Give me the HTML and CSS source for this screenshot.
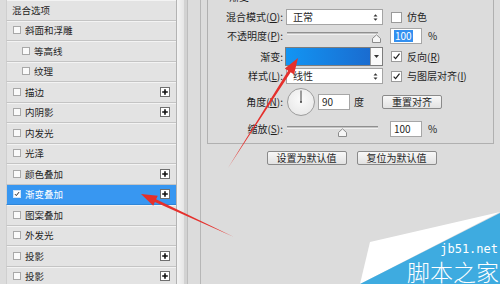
FILE: index.html
```html
<!DOCTYPE html>
<html>
<head>
<meta charset="utf-8">
<link rel="stylesheet" href="styles.css">
</head>
<body>
<div class="app">
  <div class="side">
    <div class="row plain"><span class="label">混合选项</span></div>
    <div class="row"><span class="cb"></span><span class="label">斜面和浮雕</span></div>
    <div class="row sub"><span class="cb"></span><span class="label">等高线</span></div>
    <div class="row sub"><span class="cb"></span><span class="label">纹理</span></div>
    <div class="row"><span class="cb"></span><span class="label">描边</span><svg class="plus" viewBox="0 0 10 10"><rect x="0.5" y="0.5" width="9" height="9" fill="#fff" stroke="#6e6e6e"/><path d="M5 2.2v5.6M2.2 5h5.6" stroke="#111" stroke-width="1.6"/></svg></div>
    <div class="row"><span class="cb"></span><span class="label">内阴影</span><svg class="plus" viewBox="0 0 10 10"><rect x="0.5" y="0.5" width="9" height="9" fill="#fff" stroke="#6e6e6e"/><path d="M5 2.2v5.6M2.2 5h5.6" stroke="#111" stroke-width="1.6"/></svg></div>
    <div class="row"><span class="cb"></span><span class="label">内发光</span></div>
    <div class="row"><span class="cb"></span><span class="label">光泽</span></div>
    <div class="row"><span class="cb"></span><span class="label">颜色叠加</span><svg class="plus" viewBox="0 0 10 10"><rect x="0.5" y="0.5" width="9" height="9" fill="#fff" stroke="#6e6e6e"/><path d="M5 2.2v5.6M2.2 5h5.6" stroke="#111" stroke-width="1.6"/></svg></div>
    <div class="row sel"><span class="cb checked"><svg viewBox="0 0 8 8"><path d="M1.3 4.2l1.8 1.9 3.6-4.6" fill="none" stroke="#222" stroke-width="1.3"/></svg></span><span class="label">渐变叠加</span><svg class="plus" viewBox="0 0 10 10"><rect x="0.5" y="0.5" width="9" height="9" fill="#fff" stroke="#6e6e6e"/><path d="M5 2.2v5.6M2.2 5h5.6" stroke="#111" stroke-width="1.6"/></svg></div>
    <div class="row"><span class="cb"></span><span class="label">图案叠加</span></div>
    <div class="row"><span class="cb"></span><span class="label">外发光</span></div>
    <div class="row"><span class="cb"></span><span class="label">投影</span><svg class="plus" viewBox="0 0 10 10"><rect x="0.5" y="0.5" width="9" height="9" fill="#fff" stroke="#6e6e6e"/><path d="M5 2.2v5.6M2.2 5h5.6" stroke="#111" stroke-width="1.6"/></svg></div>
    <div class="row"><span class="cb"></span><span class="label">投影</span><svg class="plus" viewBox="0 0 10 10"><rect x="0.5" y="0.5" width="9" height="9" fill="#fff" stroke="#6e6e6e"/><path d="M5 2.2v5.6M2.2 5h5.6" stroke="#111" stroke-width="1.6"/></svg></div>
  </div>
  <div class="scroll"><div class="s1"></div><div class="s2"></div><div class="s3"></div><div class="s4"></div><div class="s5"></div></div>
  <div class="main">
    <div class="group">
      <div class="legend">渐变</div>
      <div class="frow r1">
        <span class="flabel">混合模式(<u>O</u>):</span>
        <div class="select"><span>正常</span><svg class="ud" viewBox="0 0 5 9"><path d="M0.5 3.6L2.5 1.2 4.5 3.6Z M0.5 5.4L2.5 7.8 4.5 5.4Z" fill="#333"/></svg></div>
        <span class="check"></span><span class="opt">仿色</span>
      </div>
      <div class="frow r2">
        <span class="flabel">不透明度(<u>P</u>):</span>
        <div class="slider"><div class="track"></div><svg class="thumb" style="left:86px" viewBox="0 0 9 9"><path d="M0.5 8.5V4.5L4.5 0.8 8.5 4.5V8.5Z" fill="#f6f6f6" stroke="#8c8c8c"/></svg></div>
        <div class="num sel-num"><span class="hl">100</span></div><span class="pct">%</span>
      </div>
      <div class="frow r3">
        <span class="flabel">渐变:</span>
        <div class="grad"><div class="gfill"></div><div class="gdrop"><svg viewBox="0 0 5 3" width="5" height="3"><path d="M0 0H5L2.5 3Z" fill="#333"/></svg></div></div>
        <span class="check on"><svg viewBox="0 0 11 11"><path d="M2 5.6l2.4 2.5 4.8-6" fill="none" stroke="#222" stroke-width="1.5"/></svg></span><span class="opt">反向(<u>R</u>)</span>
      </div>
      <div class="frow r4">
        <span class="flabel">样式(<u>L</u>):</span>
        <div class="select"><span>线性</span><svg class="ud" viewBox="0 0 5 9"><path d="M0.5 3.6L2.5 1.2 4.5 3.6Z M0.5 5.4L2.5 7.8 4.5 5.4Z" fill="#333"/></svg></div>
        <span class="check on"><svg viewBox="0 0 11 11"><path d="M2 5.6l2.4 2.5 4.8-6" fill="none" stroke="#222" stroke-width="1.5"/></svg></span><span class="opt">与图层对齐(<u>I</u>)</span>
      </div>
      <div class="frow r5">
        <span class="flabel">角度(<u>N</u>):</span>
        <div class="dial"><svg viewBox="0 0 28 28" width="28" height="28"><line x1="14" y1="14" x2="14" y2="2.5" stroke="#444" stroke-width="1"/><circle cx="14" cy="14" r="1" fill="#444"/></svg></div>
        <div class="num n90">90</div><span class="deg">度</span>
        <button class="btn realign">重置对齐</button>
      </div>
      <div class="frow r6">
        <span class="flabel">缩放(<u>S</u>):</span>
        <div class="slider"><div class="track"></div><svg class="thumb" style="left:52px" viewBox="0 0 9 9"><path d="M0.5 8.5V4.5L4.5 0.8 8.5 4.5V8.5Z" fill="#f6f6f6" stroke="#8c8c8c"/></svg></div>
        <div class="num">100</div><span class="pct">%</span>
      </div>
    </div>
    <div class="btns">
      <button class="btn wide">设置为默认值</button>
      <button class="btn wide">复位为默认值</button>
    </div>
  </div>
</div>
<svg class="overlay" viewBox="0 0 500 284" width="500" height="284">
  <polygon points="228,168 288.1,70.7 284.8,68.5 298,58 294.0,74.5 290.7,72.3" fill="#e5302c"/>
  <polygon points="234,237 154.9,202.1 153.2,205.7 141,194 157.8,195.7 156.1,199.3" fill="#e5302c"/>
  <polygon points="370,242 500,212 360,284" fill="#ffffff"/>
  <polygon points="360,284 500,213 500,284" fill="#3eabe0"/>
</svg>
<div class="wm-en">jb51.net</div>
<div class="wm-cn">脚本之家</div>
</body>
</html>
```

FILE: styles.css
```css
* { box-sizing: border-box; margin: 0; padding: 0; }
html, body { width: 500px; height: 284px; overflow: hidden; }
body {
  background: #dcdcdc;
  font-family: "Noto Sans CJK SC", "Noto Sans", sans-serif;
  font-size: 10px;
  line-height: 12px;
  color: #1f1f1f;
  position: relative;
}
u { text-decoration: underline; text-underline-offset: 1px; }
.app { display: flex; height: 284px; }

/* left list */
.side { width: 176px; flex: none; padding-left: 6px; display: flex; flex-direction: column; }
.row {
  height: 20.5px; flex: none;
  display: flex; align-items: center;
  background: #e3e3e3;
  border-bottom: 1px solid #c4c4c4;
  border-left: 1px solid #cfcfcf;
  box-shadow: inset 0 1px 0 #f3f3f3;
  padding-left: 6px; padding-right: 6px;
  font-size: 9.5px;
}
.row.plain { padding-left: 5px; }
.row.sub { padding-left: 15px; }
.row .label { flex: 1; white-space: nowrap; }
.cb { width: 8px; height: 8px; flex: none; margin-right: 4px; background: #fafafa; border: 1px solid #a8a8a8; display: flex; }
.cb svg { width: 6px; height: 6px; }
.row.sel { background: #3897f1; color: #fff; box-shadow: none; border-bottom-color: #2f86d8; }
.row.sel .cb { background: #fff; border-color: #d0e4f8; }
.plus { width: 10px; height: 10px; flex: none; }

/* scroll gutter */
.scroll { width: 24px; flex: none; display: flex; }
.s1 { width: 1px; background: #b3b3b3; }
.s2 { width: 7px; background: linear-gradient(to right, #f4f4f4, #e6e6e6); }
.s3 { width: 3px; background: #d2d2d2; }
.s4 { width: 1px; background: #bdbdbd; }
.s5 { flex: 1; }

/* main */
.main { flex: 1; border-left: 1px solid #b6b6b6; padding-left: 6px; }
.group { width: 287px; margin-top: -10px; border: 1px solid #b0b0b0; padding-bottom: 6px; }
.legend { height: 12px; padding-left: 21px; }
.frow { display: flex; align-items: center; }
.flabel { width: 75px; flex: none; text-align: right; margin-right: 3px; white-space: nowrap; }
.r1 { margin-top: 6px; height: 16px; }
.r2 { margin-top: 3px; height: 16px; }
.r3 { margin-top: 3px; height: 19px; }
.r4 { margin-top: 2px; height: 16px; }
.r5 { margin-top: 4px; height: 28px; }
.r6 { margin-top: 4px; height: 17px; }

.select {
  width: 97px; height: 16px; flex: none;
  background: #fff; border: 1px solid #a4a4a4;
  display: flex; align-items: center; justify-content: space-between;
  padding: 0 4px 0 6px;
}
.ud { width: 5px; height: 9px; }
.check {
  width: 11px; height: 11px; flex: none; margin-left: 8px;
  background: #fff; border: 1px solid #9a9a9a; display: flex;
}
.check svg { width: 9px; height: 9px; }
.opt { margin-left: 5px; white-space: nowrap; }

.slider { width: 97px; height: 16px; flex: none; position: relative; }
.track { position: absolute; left: 1px; right: 5px; top: 4px; height: 3px; background: #c4c4c4; border-top: 1px solid #8f8f8f; border-bottom: 1px solid #f0f0f0; }
.r6 .track { top: 5px; }
.thumb { position: absolute; top: 6px; width: 9px; height: 9px; }
.r6 .thumb { top: 7px; }

.num {
  width: 32px; height: 16px; flex: none; margin-left: 7px;
  background: #fff; border: 1px solid #a6a6a6;
  padding-left: 3px; display: flex; align-items: center;
}
.hl { background: #3390f0; color: #fff; padding: 0 1px; line-height: 12px; }
.pct { margin-left: 6px; }

.grad { width: 98px; height: 19px; flex: none; margin-left: -1px; display: flex; border: 1px solid #7d7d7d; }
.gfill { flex: 1; background: linear-gradient(to right, #1295f3, #1a6cd0); }
.gdrop { width: 12px; background: #fafafa; border-left: 1px solid #9a9a9a; display: flex; align-items: center; justify-content: center; }

.dial {
  width: 28px; height: 28px; flex: none; margin-left: 1px;
  border-radius: 50%; border: 1px solid #9c9c9c;
  background: radial-gradient(circle at 50% 40%, #fbfbfb, #e4e4e4);
  display: flex; align-items: center; justify-content: center;
}
.dial svg { margin: -1px; }
.n90 { margin-left: 3px; }
.deg { margin-left: 4px; }

.btn {
  font-family: inherit; font-size: 10px; line-height: 12px; color: #1f1f1f;
  height: 14px; border: 1px solid #8a8a8a; border-radius: 2px;
  background: linear-gradient(#f8f8f8, #e2e2e2);
  display: flex; align-items: center; justify-content: center;
}
.realign { width: 60px; margin-left: 18px; }
.btns { width: 287px; display: flex; justify-content: center; gap: 10px; margin-top: 7px; padding-left: 2px; }
.wide { width: 80px; }

/* overlays */
.overlay { position: absolute; left: 0; top: 0; pointer-events: none; }
.wm-en { position: absolute; right: 2px; top: 243px; font-family: "DejaVu Sans Mono", monospace; font-size: 12px; line-height: 13px; color: #fff; }
.wm-cn { position: absolute; right: 1px; top: 260px; font-size: 23px; line-height: 23px; color: #fff; font-weight: 300; }
```
